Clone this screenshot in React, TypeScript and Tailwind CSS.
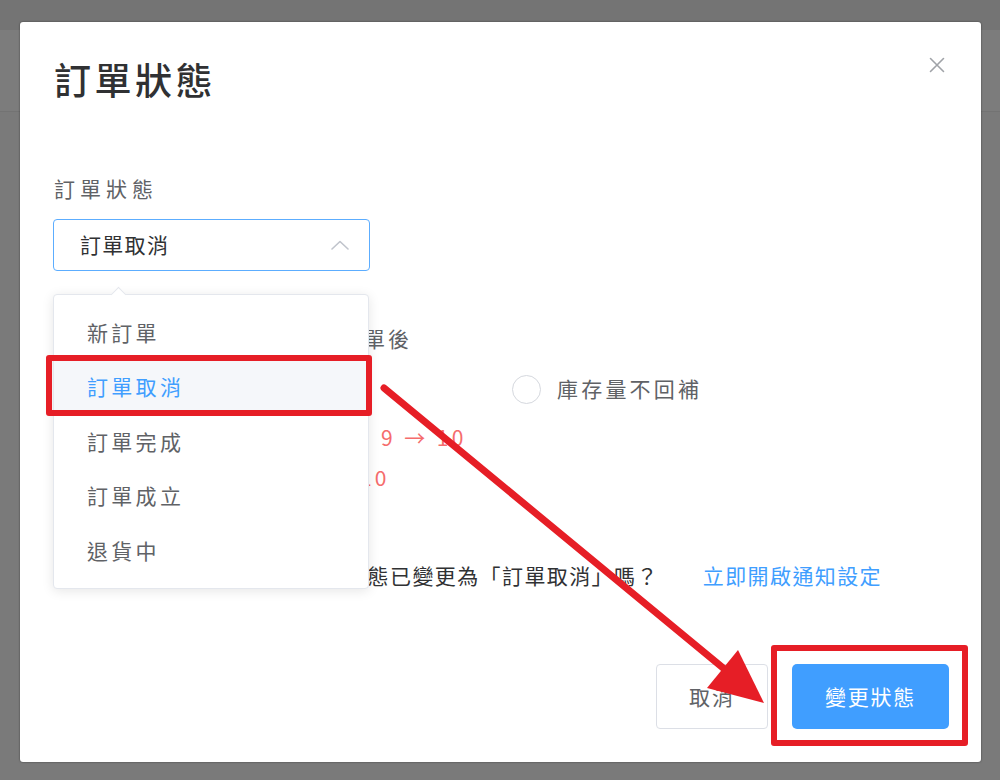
import React from "react";

const items = ["新訂單", "訂單取消", "訂單完成", "訂單成立", "退貨中"];

export default function App() {
  return (
    <div className="relative w-[1000px] h-[780px] overflow-hidden bg-[#7a7a7a] font-['Noto_Sans_CJK_TC','Noto_Sans',sans-serif]">
      <div className="h-[30px] bg-[#747474]" />
      <div className="h-[82px] bg-[#7c7c7c] border-b border-[#737373]" />

      {/* modal */}
      <div className="absolute left-[20px] top-[22px] w-[961px] h-[740px] bg-white rounded-[3px] shadow-[0_0_2px_rgba(0,0,0,0.55)] flex flex-col">
        <div className="relative pl-[34px] pt-[35px]">
          <h1 className="text-[37px] leading-[44px] font-medium text-[#303133] tracking-[3.5px]">訂單狀態</h1>
          <button className="absolute right-[36px] top-[35px] w-[16px] h-[16px] flex items-center justify-center">
            <svg width="16" height="16" viewBox="0 0 16 16" fill="none" stroke="#a0a3a8" strokeWidth="1.6" strokeLinecap="round">
              <path d="M1.5 1.5 L14.5 14.5 M14.5 1.5 L1.5 14.5" />
            </svg>
          </button>
        </div>

        <div className="pl-[33px] flex flex-col">
          <div className="mt-[72px] pl-[1px] text-[21px] leading-[30px] tracking-[5px] text-[#606266]">訂單狀態</div>

          <div className="relative mt-[16px] w-[317px] h-[52px]">
            <div className="h-full border border-[#5cadff] rounded-[4px] flex items-center justify-between pl-[26px] pr-[20px]">
              <span className="text-[21px] tracking-[1.3px] text-[#303133]">訂單取消</span>
              <svg width="18" height="10" viewBox="0 0 18 10" fill="none" stroke="#c0c4cc" strokeWidth="1.6" strokeLinecap="round" strokeLinejoin="round">
                <path d="M1 9 L9 1.5 L17 9" />
              </svg>
            </div>

            {/* dropdown */}
            <div className="absolute left-0 top-[75px] w-[316px] h-[295px] bg-white border border-[#e4e7ed] rounded-[4px] shadow-[0_2px_12px_rgba(0,0,0,0.1)] pt-[10px] z-10">
              <div className="absolute -top-[6px] left-[59px] w-[11px] h-[11px] rotate-45 bg-white border-l border-t border-[#e4e7ed]" />
              {items.map((it) => {
                const active = it === "訂單取消";
                return (
                  <div
                    key={it}
                    className={
                      "relative h-[54.5px] flex items-center px-[33px] text-[21px] tracking-[3.3px] " +
                      (active ? "bg-[#f5f7fa] text-[#409eff]" : "text-[#606266]")
                    }
                  >
                    {it}
                  </div>
                );
              })}
            </div>
          </div>

          <div className="mt-[52px] pl-[1px] text-[21px] leading-[30px] tracking-[2.85px] text-[#606266] whitespace-nowrap">商品庫存量將於變更為取消訂單後</div>

          <div className="mt-[21px] pl-[1px] flex items-center h-[30px]">
            <label className="w-[458px] flex items-center">
              <span className="w-[29px] h-[29px] rounded-full border-[1.5px] border-[#d5d8de]" />
              <span className="ml-[17px] text-[21px] tracking-[3.2px] text-[#606266]">庫存量回補</span>
            </label>
            <label className="flex items-center">
              <span className="w-[29px] h-[29px] rounded-full border-[1.5px] border-[#d5d8de]" />
              <span className="ml-[16px] text-[21px] tracking-[3.2px] text-[#606266]">庫存量不回補</span>
            </label>
          </div>

          <div className="mt-[18px] pl-[1px] flex h-[30px] leading-[30px] text-[21px] text-[#f56c6c] whitespace-nowrap">
            <span className="w-[327px]">商品 A 庫存：</span>
            <span className="tracking-[3.4px]">9 → 10</span>
          </div>
          <div className="mt-[10px] pl-[1px] flex h-[30px] leading-[30px] text-[21px] text-[#f56c6c] whitespace-nowrap">
            <span className="w-[306px]">商品 B 庫存：</span>
            <span className="tracking-[3px]">10</span>
          </div>

          <div className="mt-[68px] pl-[1px] h-[30px] leading-[30px] text-[21px] tracking-[1.4px] text-[#303133] whitespace-nowrap">
            是否要發送通知告知顧客訂單狀態已變更為「訂單取消」嗎？
            <a className="ml-[44px] text-[#409eff]">立即開啟通知設定</a>
          </div>
        </div>

        <div className="mt-[74px] pr-[32px] flex justify-end gap-[24px]">
          <button className="w-[112px] h-[65px] border border-[#dcdfe6] rounded-[4px] bg-white text-[21px] tracking-[2px] text-[#606266]">取消</button>
          <button className="w-[157px] h-[65px] rounded-[5px] bg-[#409eff] text-[21px] tracking-[1.7px] text-white">變更狀態</button>
        </div>
      </div>

      {/* annotations */}
      <div className="absolute left-[46px] top-[355px] w-[326px] h-[61px] border-[6px] border-[#e61e26] rounded-[3px] z-20" />
      <div className="absolute left-[771px] top-[645px] w-[197px] h-[101px] border-[6px] border-[#e61e26] rounded-[3px] z-20" />
      <svg className="absolute left-0 top-0 z-20 pointer-events-none" width="1000" height="780" viewBox="0 0 1000 780">
        <line x1="384" y1="388" x2="728" y2="672" stroke="#e61e26" strokeWidth="7" strokeLinecap="round" />
        <polygon points="764,703 707,688 738,650" fill="#e61e26" />
      </svg>
    </div>
  );
}
